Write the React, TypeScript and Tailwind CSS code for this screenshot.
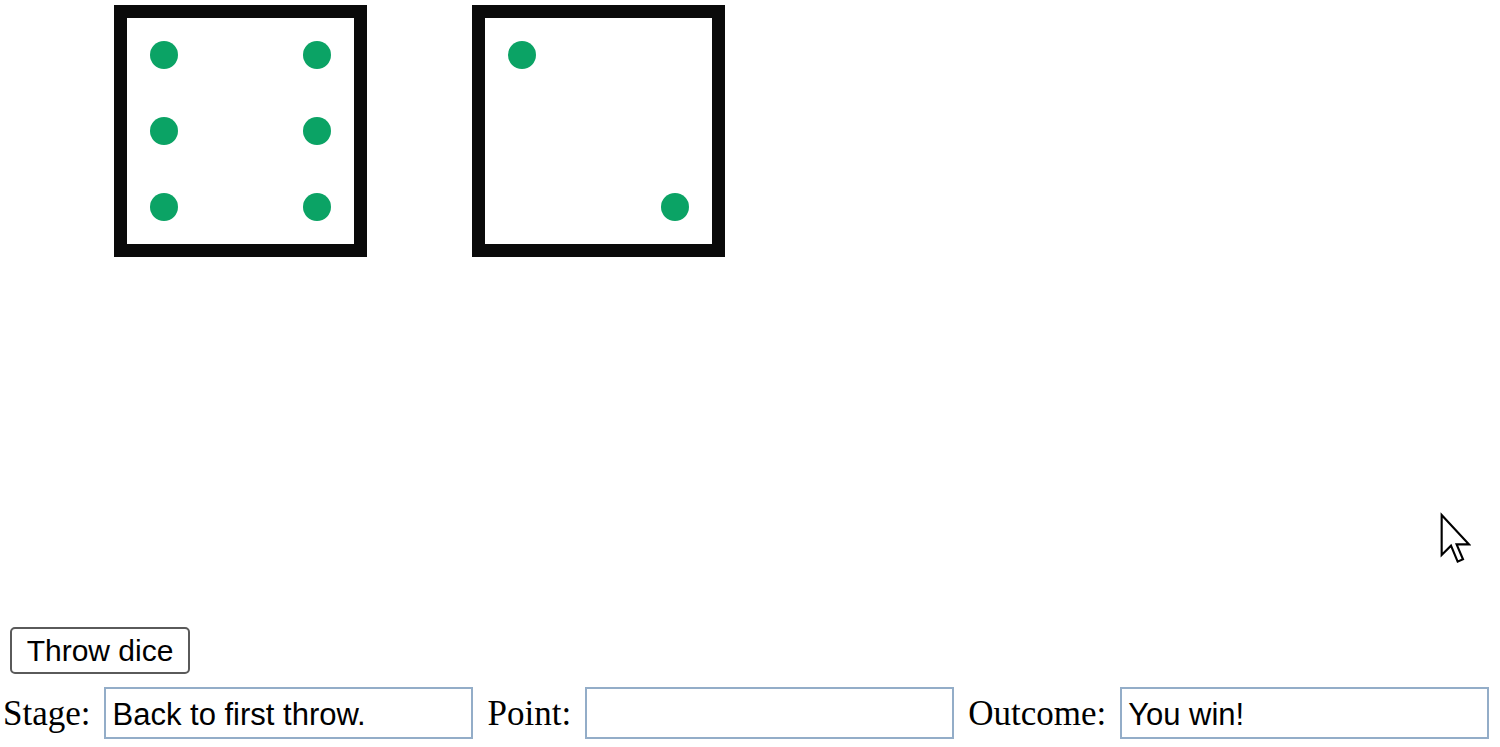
const six = [
  [true, false, true],
  [true, false, true],
  [true, false, true],
];

const two = [
  [true, false, false],
  [false, false, false],
  [false, false, true],
];

function Die({ pips }: { pips: boolean[][] }) {
  return (
    <div className="w-[253px] h-[252px] border-[13px] border-[#0a0a0a] bg-white p-[23px] flex flex-col justify-between">
      {pips.map((row, r) => (
        <div key={r} className="flex justify-between">
          {row.map((on, c) => (
            <div
              key={c}
              className={`w-7 h-7 rounded-full ${on ? 'bg-[#0ba365]' : 'bg-transparent'}`}
            />
          ))}
        </div>
      ))}
    </div>
  );
}

function Field({ label, value }: { label: string; value: string }) {
  return (
    <>
      <span className="font-['Liberation_Serif',serif] text-[35px] leading-none text-black">{label}</span>
      <input
        readOnly
        value={value}
        className="w-[369px] h-[52px] border-2 border-[#93adc8] bg-white px-[6px] pt-[3px] font-['Liberation_Sans',Arial,sans-serif] text-[31px] text-black outline-none"
      />
    </>
  );
}

export default function App() {
  return (
    <div className="relative w-[1500px] h-[747px] bg-white overflow-hidden">
      <div className="h-[620px] pt-[5px] pl-[114px] flex items-start gap-[105px]">
        <Die pips={six} />
        <Die pips={two} />
      </div>

      <div className="pl-[10px] pt-[7px]">
        <button className="w-[180px] h-[47px] border-2 border-[#5a5a5a] rounded-[5px] bg-white font-['Liberation_Sans',Arial,sans-serif] text-[30px] leading-none text-black">
          Throw dice
        </button>
      </div>

      <div className="flex items-center pl-[3px] pt-[13px] gap-[14px]">
        <Field label="Stage:" value="Back to first throw." />
        <Field label="Point:" value="" />
        <Field label="Outcome:" value="You win!" />
      </div>

      <svg
        className="absolute left-[1439px] top-[512px]"
        width="32"
        height="54"
        viewBox="0 0 12 20"
      >
        <path
          d="M1 1 L1 16 L4.5 12.5 L7 18.5 L9 17.6 L6.6 12 L11.2 12 Z"
          fill="white"
          stroke="black"
          strokeWidth="0.8"
          strokeLinejoin="miter"
        />
      </svg>
    </div>
  );
}
